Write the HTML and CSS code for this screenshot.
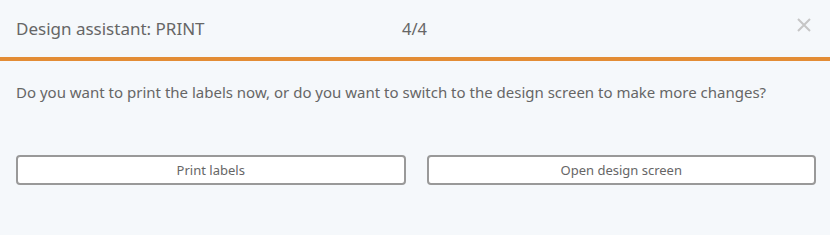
FILE: index.html
```html
<!DOCTYPE html>
<html>
<head>
<meta charset="utf-8">
<link rel="stylesheet" href="styles.css">
</head>
<body>
<div class="dialog">
  <div class="header">
    <div class="title">Design assistant: PRINT</div>
    <div class="step">4/4</div>
    <div class="close" aria-label="close">
      <svg width="14" height="14" viewBox="0 0 14 14"><path d="M1 1L13 13M13 1L1 13" stroke="#c6c6c6" stroke-width="2" fill="none"/></svg>
    </div>
  </div>
  <div class="body">
    <p class="message">Do you want to print the labels now, or do you want to switch to the design screen to make more changes?</p>
    <div class="actions">
      <button class="btn">Print labels</button>
      <button class="btn">Open design screen</button>
    </div>
  </div>
</div>
</body>
</html>
```
FILE: styles.css
```css
html, body {
  margin: 0;
  padding: 0;
  background: #f5f8fb;
}
body {
  font-family: "Noto Sans", "DejaVu Sans", sans-serif;
  color: #666;
}
.dialog {
  width: 830px;
  height: 235px;
  background: #f5f8fb;
}
.header {
  height: 57px;
  border-bottom: 4px solid #e38c35;
  display: flex;
  align-items: center;
  padding: 0 16px;
  box-sizing: content-box;
}
.title {
  font-size: 17px;
  color: #666;
  width: 386px;
}
.step {
  font-size: 16.5px;
  color: #666;
  flex: 1;
}
.close {
  display: flex;
  align-self: flex-start;
  margin-top: 18px;
  margin-right: 3px;
}
.body {
  padding: 0 14px 0 16px;
}
.message {
  margin: 21px 0 0;
  font-size: 15px;
  line-height: 20px;
  color: #666;
}
.actions {
  margin-top: 53px;
  display: flex;
  gap: 21px;
}
.btn {
  flex: 1;
  height: 30px;
  background: #fff;
  border: 2px solid #999;
  border-radius: 4px;
  font-family: inherit;
  font-size: 13px;
  color: #666;
  padding: 0;
}
```
